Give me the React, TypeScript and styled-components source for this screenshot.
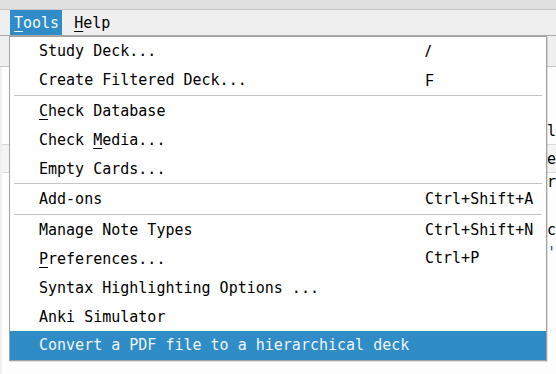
import { createGlobalStyle } from "styled-components";
import styled from "styled-components";

const GlobalStyle = createGlobalStyle`
  html, body {
    margin: 0;
    padding: 0;
    background: #efefef;
  }
  body {
    font-family: "DejaVu Sans Mono", "Liberation Mono", monospace;
    font-size: 15px;
    color: #000;
  }
`;

const Window = styled.div`
  position: relative;
  width: 556px;
  height: 374px;
  overflow: hidden;
  background: #efefef;
`;
const TitleStrip = styled.div`
  height: 9px;
  background: #e0e0e0;
  border-bottom: 1px solid #c6c6c6;
`;
const MenuBar = styled.div`
  display: flex;
  height: 25px;
  padding-left: 10px;
  background: #efefef;
  border-bottom: 1px solid #a9a9a9;
`;
const MenuTitle = styled.div<{ $active?: boolean }>`
  display: flex;
  align-items: center;
  padding: 0 3px 0 4px;
  margin-right: 8px;
  background: ${(p) => (p.$active ? "#308cc6" : "transparent")};
  color: ${(p) => (p.$active ? "#f4f8fc" : "#000")};
`;
const Mnemonic = styled.span`
  text-decoration: underline;
  text-underline-offset: 3px;
  text-decoration-thickness: 1px;
`;
const ToolStrip = styled.div`
  height: 30px;
  background: #efefef;
  border-bottom: 1px solid #c8c8c8;
`;
const Body = styled.div`
  display: flex;
  height: 320px;
`;
const SideStrip = styled.div`
  width: 9px;
  background: #efefef;
`;
const Panel = styled.div`
  flex: 1;
  display: flex;
  flex-direction: column;
  padding-top: 51px;
  background: #fdfdfd;
`;
const PanelRow = styled.div<{ $h: number; $shade?: boolean; $line?: boolean }>`
  display: flex;
  align-items: center;
  height: ${(p) => p.$h}px;
  padding-left: 536px;
  background: ${(p) => (p.$shade ? "#f4f4f4" : "transparent")};
  border-bottom: ${(p) => (p.$line ? "1px solid #d8d8d8" : "none")};
  white-space: nowrap;
  overflow: hidden;
`;
const LinkText = styled.span`
  color: #2a3fd0;
`;

const Popup = styled.div`
  position: absolute;
  top: 36px;
  left: 9px;
  width: 536px;
  display: flex;
  flex-direction: column;
  background: #fff;
  border: 1px solid #a2a2a2;
  box-shadow: 1px 1px 0 rgba(0, 0, 0, 0.12);
`;
const Item = styled.div<{ $hot?: boolean }>`
  display: grid;
  grid-template-columns: 1fr 121px;
  align-items: center;
  height: 28.8px;
  padding-left: 29px;
  white-space: nowrap;
  background: ${(p) => (p.$hot ? "#308cc6" : "transparent")};
  color: ${(p) => (p.$hot ? "#eef4fa" : "#000")};
`;
const Shortcut = styled.span<{ $sans?: boolean }>`
  font-family: ${(p) =>
    p.$sans
      ? '"Noto Sans", "Liberation Sans", sans-serif'
      : '"DejaVu Sans Mono", "Liberation Mono", monospace'};
  font-size: ${(p) => (p.$sans ? "16.5px" : "15px")};
  line-height: 1;
`;
const Separator = styled.div`
  height: 2px;
  margin: 0 4px 0 4px;
  border-top: 1px solid #c4c4c4;
  box-sizing: border-box;
`;

type Entry =
  | { sep: true }
  | {
      sep?: false;
      label: string;
      mn?: number;
      key?: string;
      sans?: boolean;
      hot?: boolean;
    };

const entries: Entry[] = [
  { label: "Study Deck...", key: "/", sans: true },
  { label: "Create Filtered Deck...", key: "F", sans: true },
  { sep: true },
  { label: "Check Database", mn: 0 },
  { label: "Check Media...", mn: 6 },
  { label: "Empty Cards..." },
  { sep: true },
  { label: "Add-ons", key: "Ctrl+Shift+A" },
  { sep: true },
  { label: "Manage Note Types", key: "Ctrl+Shift+N" },
  { label: "Preferences...", mn: 0, key: "Ctrl+P" },
  { label: "Syntax Highlighting Options ..." },
  { label: "Anki Simulator" },
  { label: "Convert a PDF file to a hierarchical deck", hot: true },
];

function Label({ text, mn }: { text: string; mn?: number }) {
  if (mn === undefined) return <span>{text}</span>;
  return (
    <span>
      {text.slice(0, mn)}
      <Mnemonic>{text[mn]}</Mnemonic>
      {text.slice(mn + 1)}
    </span>
  );
}

export default function App() {
  return (
    <>
      <GlobalStyle />
      <Window>
        <TitleStrip />
        <MenuBar>
          <MenuTitle $active>
            <Label text="Tools" mn={0} />
          </MenuTitle>
          <MenuTitle>
            <Label text="Help" mn={0} />
          </MenuTitle>
        </MenuBar>
        <ToolStrip />
        <Body>
          <SideStrip />
          <Panel>
            <PanelRow $h={26} $line>
              al
            </PanelRow>
            <PanelRow $h={27} $line $shade>
              te
            </PanelRow>
            <PanelRow $h={18}>er</PanelRow>
            <PanelRow $h={27} />
            <PanelRow $h={24}>ac</PanelRow>
            <PanelRow $h={22}>
              <LinkText>/'</LinkText>
            </PanelRow>
          </Panel>
        </Body>
        <Popup>
          {entries.map((e, i) =>
            e.sep ? (
              <Separator key={i} />
            ) : (
              <Item key={i} $hot={e.hot}>
                <Label text={e.label} mn={e.mn} />
                <Shortcut $sans={e.sans}>{e.key ?? ""}</Shortcut>
              </Item>
            )
          )}
        </Popup>
      </Window>
    </>
  );
}
